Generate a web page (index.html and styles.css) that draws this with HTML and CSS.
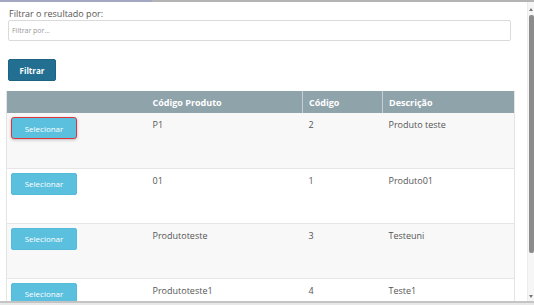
FILE: index.html
```html
<!DOCTYPE html>
<html lang="pt">
<head>
<meta charset="utf-8">
<link rel="stylesheet" href="styles.css">
</head>
<body>
<div class="topbar"><div class="topbar-left"></div></div>
<div class="middle">
  <main class="main">
    <label class="filter-label">Filtrar o resultado por:</label>
    <input class="filter-input" type="text" placeholder="Filtrar por...">
    <button class="btn-filter">Filtrar</button>
    <table class="grid">
      <thead>
        <tr>
          <th class="c1"></th>
          <th class="c2">Código Produto</th>
          <th class="c3">Código</th>
          <th class="c4">Descrição</th>
        </tr>
      </thead>
      <tbody>
        <tr class="odd">
          <td class="btn-cell"><button class="btn-sel focused">Selecionar</button></td>
          <td>P1</td><td>2</td><td>Produto teste</td>
        </tr>
        <tr>
          <td class="btn-cell"><button class="btn-sel">Selecionar</button></td>
          <td>01</td><td>1</td><td>Produto01</td>
        </tr>
        <tr class="odd">
          <td class="btn-cell"><button class="btn-sel">Selecionar</button></td>
          <td>Produtoteste</td><td>3</td><td>Testeuni</td>
        </tr>
        <tr>
          <td class="btn-cell"><button class="btn-sel">Selecionar</button></td>
          <td>Produtoteste1</td><td>4</td><td>Teste1</td>
        </tr>
      </tbody>
    </table>
  </main>
  <div class="scrollbar">
    <div class="arrow-up"></div>
    <div class="thumb"></div>
    <div class="track-rest"></div>
    <div class="arrow-down"></div>
  </div>
</div>
<div class="bottombar"></div>
</body>
</html>
```
FILE: styles.css
```css
* { box-sizing: border-box; }
html, body { margin: 0; padding: 0; height: 305px; overflow: hidden; background: #fff; }
body {
  font-family: "Open Sans", "Noto Sans", sans-serif;
  color: #555;
  display: flex;
  flex-direction: column;
}
.topbar { height: 2px; background: #b4b4b4; display: flex; flex: none; }
.topbar-left { width: 152px; background: #a3a7c2; }
.middle { flex: 1; display: flex; min-height: 0; }
.main { flex: 1; overflow: hidden; display: flex; flex-direction: column; align-items: flex-start; padding: 0 0 0 6px; }
.main > * { flex: none; }
.filter-label { font-size: 9px; line-height: 12px; color: #555; margin: 6px 0 0 3px; }
.filter-input {
  margin: 0 0 0 2px;
  width: 503px; height: 21px;
  border: 1px solid #dadada; border-radius: 2px;
  padding: 0 3px;
  font-family: inherit; font-size: 7px; color: #555;
}
.filter-input::placeholder { color: #999; }
.btn-filter {
  margin: 18px 0 0 2px;
  width: 48px; height: 22px;
  background: #226f92; color: #fff;
  border: 1px solid #1d6383; border-radius: 2px;
  font-family: inherit; font-size: 8px; font-weight: 700;
  padding: 0;
}
.grid {
  margin-top: 10px;
  width: 508px;
  border-collapse: collapse;
  table-layout: fixed;
  font-size: 9px;
  border-left: 1px solid #e4e4e4;
  border-right: 1px solid #e4e4e4;
}
.grid th {
  background: #8fa3ab; color: #fff; font-weight: 700;
  text-align: left; height: 22px; padding: 0 6px;
  border-left: 1px solid #c5d0d4;
}
.grid th.c1, .grid th.c2 { border-left: none; }
.c1 { width: 140px; }
.c2 { width: 156px; }
.c3 { width: 80px; }
.c4 { width: 132px; }
.grid td {
  height: 55px; vertical-align: top;
  padding: 5px 6px 0; color: #555;
  border-top: 1px solid #e6e6e6;
}
.grid tbody tr:first-child td { border-top: none; }
.grid tr.odd td { background: #f8f8f8; }
.grid td.btn-cell { padding: 4px 4px 0 4px; }
.btn-sel {
  width: 66px; height: 22px;
  background: #5bc0de; color: #fff;
  border: 1px solid #54bbd9; border-radius: 2px;
  font-family: inherit; font-size: 8px; padding: 0;
}
.btn-sel.focused {
  border: 1.5px solid #e0343d;
  border-radius: 3px;
  box-shadow: 0 1px 3px rgba(0,0,0,0.25);
}
.scrollbar {
  width: 7px; flex: none;
  display: flex; flex-direction: column; align-items: center;
  background: #f6f6f6;
  border-left: 1px solid #ececec;
}
.arrow-up {
  margin-top: 6px;
  width: 0; height: 0;
  border-left: 2.5px solid transparent; border-right: 2.5px solid transparent;
  border-bottom: 3px solid #777;
}
.thumb { margin-top: 4px; width: 5px; height: 238px; background: #8c8c8c; border-radius: 2px; }
.track-rest { flex: 1; }
.arrow-down {
  margin-bottom: 3px;
  width: 0; height: 0;
  border-left: 2.5px solid transparent; border-right: 2.5px solid transparent;
  border-top: 3px solid #777;
}
.bottombar { height: 4px; flex: none; border-top: 2px solid #c4c4c4; background: #e8e8e8; }
```
